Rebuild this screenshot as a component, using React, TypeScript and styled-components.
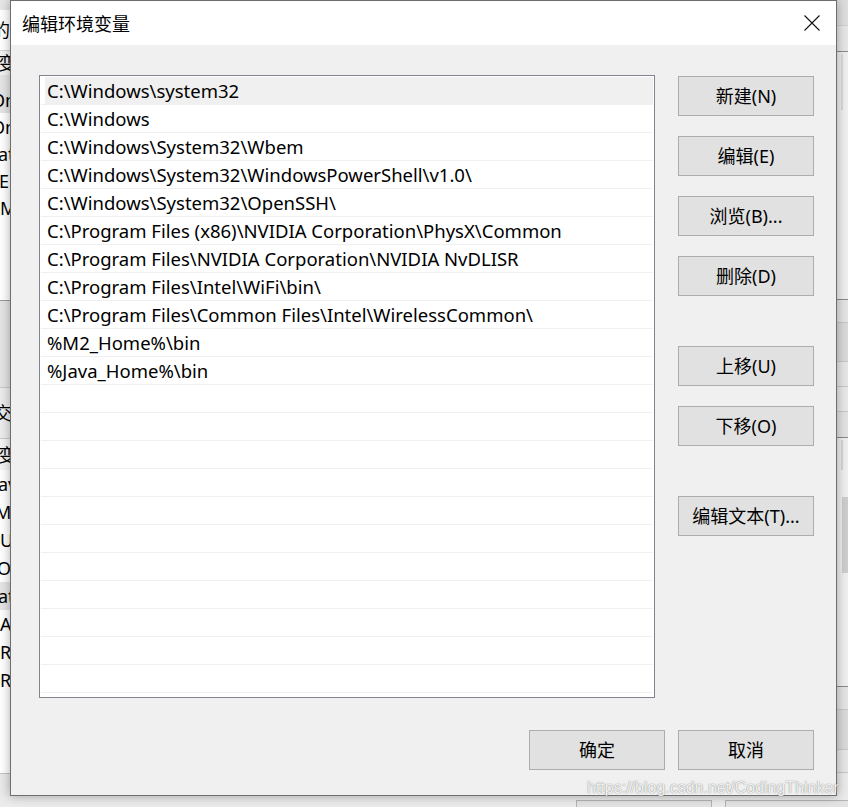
import React from 'react';
import styled, { createGlobalStyle } from 'styled-components';

const Global = createGlobalStyle`
  html, body { margin: 0; padding: 0; background: #e8e8e8; }
  body {
    width: 848px; height: 807px; overflow: hidden;
    font-family: "Noto Sans", "Noto Sans CJK SC", sans-serif;
    -webkit-font-smoothing: antialiased;
  }
`;

const Screen = styled.div`
  position: relative;
  width: 848px;
  height: 807px;
  display: grid;
  grid-template-columns: 10px 827px 11px;
  grid-template-rows: 796px 11px;
  background: #e8e8e8;
  overflow: hidden;
`;

/* ---------- background window strips ---------- */
const Strip = styled.div<{ $col: string; $row: string }>`
  grid-column: ${p => p.$col};
  grid-row: ${p => p.$row};
  display: flex;
  flex-direction: column;
  overflow: hidden;
  background: #ececec;
`;

const Band = styled.div<{ $h: number; $bg?: string; $line?: string; $pad?: number }>`
  flex: 0 0 ${p => p.$h}px;
  height: ${p => p.$h}px;
  box-sizing: border-box;
  background: ${p => p.$bg || 'transparent'};
  border-bottom: ${p => (p.$line ? `1px solid ${p.$line}` : 'none')};
  display: flex;
  align-items: center;
  overflow: hidden;
  padding-top: ${p => p.$pad || 0}px;
  position: relative;
`;

const Frag = styled.span<{ $shift?: number }>`
  display: block;
  white-space: nowrap;
  font-size: 18px;
  line-height: 20px;
  color: #000;
  margin-left: ${p => p.$shift || 0}px;
`;

const Thumb = styled.div<{ $top: number; $h: number; $left: number; $w: number; $bg: string }>`
  position: absolute;
  top: ${p => p.$top}px;
  left: ${p => p.$left}px;
  width: ${p => p.$w}px;
  height: ${p => p.$h}px;
  background: ${p => p.$bg};
`;

const BottomRow = styled.div`
  grid-column: 1 / 4;
  grid-row: 2;
  display: flex;
  gap: 13px;
  padding: 4px 0 0 576px;
  background: #ebebeb;
  overflow: hidden;
`;

const GhostButton = styled.div<{ $w: number }>`
  flex: 0 0 ${p => p.$w}px;
  height: 20px;
  box-sizing: border-box;
  border: 1px solid #b4b4b4;
  background: #e3e3e3;
`;

/* ---------- dialog ---------- */
const Dialog = styled.div`
  grid-column: 2;
  grid-row: 1;
  position: relative;
  z-index: 1;
  box-sizing: border-box;
  border: 1px solid #6e6e6e;
  background: #f0f0f0;
  box-shadow: 0 0 10px rgba(0, 0, 0, 0.32);
  display: flex;
  flex-direction: column;
`;

const TitleBar = styled.div`
  height: 44px;
  flex: 0 0 44px;
  background: #fff;
  display: flex;
  align-items: center;
  justify-content: space-between;
  padding: 0 16px 0 11px;
`;

const Title = styled.div`
  font-family: "Noto Sans CJK SC", sans-serif;
  font-size: 18px;
  color: #000;
  line-height: 20px;
  margin-top: -1px;
`;

const CloseIcon = styled.svg`
  width: 16px;
  height: 16px;
  display: block;
  margin-top: -1px;
`;

const Body = styled.div`
  flex: 1;
  display: flex;
  flex-direction: column;
  padding: 30px 22px 25px 28px;
`;

const Main = styled.div`
  display: flex;
  gap: 23px;
  height: 623px;
`;

const ListBox = styled.div`
  width: 616px;
  height: 623px;
  box-sizing: border-box;
  border: 1px solid #82858e;
  background: #fff;
  padding: 1px 1px 0 1px;
  overflow: hidden;
`;

const Row = styled.div`
  height: 28px;
  box-sizing: border-box;
  border-bottom: 1px solid #f0f0f0;
  display: flex;
  padding-left: 4px;
`;

const RowText = styled.div<{ $selected?: boolean }>`
  flex: 1;
  display: flex;
  align-items: center;
  padding-left: 2px;
  background: ${p => (p.$selected ? '#f0f0f0' : 'transparent')};
  font-family: "Noto Sans", "Noto Sans CJK SC", sans-serif;
  font-size: 18.5px;
  color: #000;
  white-space: nowrap;
`;

const ButtonColumn = styled.div`
  display: flex;
  flex-direction: column;
  gap: 20px;
  padding-top: 1px;
`;

const Button = styled.div<{ $gapBefore?: number }>`
  width: 136px;
  height: 40px;
  box-sizing: border-box;
  border: 1px solid #adadad;
  background: #e1e1e1;
  display: flex;
  align-items: center;
  justify-content: center;
  font-family: "Noto Sans", "Noto Sans CJK SC", sans-serif;
  font-size: 18px;
  color: #000;
  margin-top: ${p => p.$gapBefore || 0}px;
  padding-bottom: 2px;
`;

const Footer = styled.div`
  margin-top: 32px;
  display: flex;
  justify-content: flex-end;
  gap: 13px;
`;

const Watermark = styled.div`
  position: absolute;
  z-index: 2;
  left: 587px;
  top: 778px;
  font-family: "Liberation Sans", Arial, sans-serif;
  font-size: 16px;
  line-height: 20px;
  color: rgba(255, 255, 255, 0.9);
  text-shadow: 0 0 1px rgba(0, 0, 0, 0.45), 0 0 2px rgba(0, 0, 0, 0.15);
  white-space: nowrap;
  pointer-events: none;
`;

const paths = [
  'C:\\Windows\\system32',
  'C:\\Windows',
  'C:\\Windows\\System32\\Wbem',
  'C:\\Windows\\System32\\WindowsPowerShell\\v1.0\\',
  'C:\\Windows\\System32\\OpenSSH\\',
  'C:\\Program Files (x86)\\NVIDIA Corporation\\PhysX\\Common',
  'C:\\Program Files\\NVIDIA Corporation\\NVIDIA NvDLISR',
  'C:\\Program Files\\Intel\\WiFi\\bin\\',
  'C:\\Program Files\\Common Files\\Intel\\WirelessCommon\\',
  '%M2_Home%\\bin',
  '%Java_Home%\\bin',
];

const rows = [...paths, ...Array(11).fill('')];

const topFrags: [string, number][] = [['On', -9], ['On', -9], ['at', -2], ['EM', -1], ['M', 0]];
const lowFrags: [string, number][] = [
  ['av', -2], ['M2', -5], ['JU', -5], ['OS', -3], ['at', -2], ['A', 0], ['R', 0], ['R', 0],
];

export default function App() {
  return (
    <>
      <Global />
      <Screen>
        <Strip $col="1" $row="1">
          <Band $h={10} $bg="#e6e6e6" />
          <Band $h={41} $bg="#fff" $line="#d4d4d4">
            <Frag $shift={-8}>的</Frag>
          </Band>
          <Band $h={24} $bg="#f2f2f2">
            <Frag $shift={-2}>变量</Frag>
          </Band>
          <Band $h={38} $bg="#e5e5e5" $pad={12}>
            <Frag $shift={topFrags[0][1]}>{topFrags[0][0]}</Frag>
          </Band>
          {topFrags.slice(1).map(([f, s], i) => (
            <Band key={i} $h={27} $bg="#fff">
              <Frag $shift={s}>{f}</Frag>
            </Band>
          ))}
          <Band $h={80} $bg="#fff" $line="#9a9a9a" />
          <Band $h={87} $bg="#e4e4e4" $line="#c9c9c9" />
          <Band $h={51} $bg="#ececec" $line="#c9c9c9">
            <Frag $shift={-6}>交</Frag>
          </Band>
          <Band $h={31} $bg="#f4f4f4">
            <Frag $shift={-2}>变量</Frag>
          </Band>
          {lowFrags.map(([f, s], i) => (
            <Band key={i} $h={28} $bg={i === 4 ? '#e5e5e5' : '#fff'}>
              <Frag $shift={s}>{f}</Frag>
            </Band>
          ))}
          <Band $h={80} $bg="#fff" $line="#c2c2c2" />
          <Band $h={22} $bg="#e9e9e9" />
        </Strip>

        <Dialog>
          <TitleBar>
            <Title>编辑环境变量</Title>
            <CloseIcon viewBox="0 0 16 16">
              <path d="M0.5 0.5 L15.5 15.5 M15.5 0.5 L0.5 15.5" stroke="#111" strokeWidth="1.1" fill="none" />
            </CloseIcon>
          </TitleBar>
          <Body>
            <Main>
              <ListBox>
                {rows.map((r, i) => (
                  <Row key={i}>
                    <RowText $selected={i === 0}>{r}</RowText>
                  </Row>
                ))}
              </ListBox>
              <ButtonColumn>
                <Button>新建(N)</Button>
                <Button>编辑(E)</Button>
                <Button>浏览(B)...</Button>
                <Button>删除(D)</Button>
                <Button $gapBefore={30}>上移(U)</Button>
                <Button>下移(O)</Button>
                <Button $gapBefore={30}>编辑文本(T)...</Button>
              </ButtonColumn>
            </Main>
            <Footer>
              <Button>确定</Button>
              <Button>取消</Button>
            </Footer>
          </Body>
        </Dialog>

        <Strip $col="3" $row="1">
          <Band $h={26} $bg="#dedede" $line="#d0d0d0" />
          <Band $h={26} $bg="#e6e6e6" $line="#8a8a8a" />
          <Band $h={248} $bg="#efefef" $line="#8a8a8a">
            <Thumb $top={2} $h={56} $left={4} $w={2} $bg="#dadada" />
          </Band>
          <Band $h={23} $bg="#e4e4e4" $line="#c6c6c6" />
          <Band $h={39} $bg="#d9d9d9" $line="#c6c6c6" />
          <Band $h={25} $bg="#e6e6e6" $line="#c6c6c6" />
          <Band $h={25} $bg="#e8e8e8" $line="#c6c6c6" />
          <Band $h={26} $bg="#e2e2e2" $line="#8a8a8a" />
          <Band $h={249} $bg="#efefef" $line="#8a8a8a">
            <Thumb $top={2} $h={30} $left={4} $w={2} $bg="#d6d6d6" />
            <Thumb $top={59} $h={76} $left={5} $w={6} $bg="#cdcdcd" />
          </Band>
          <Band $h={23} $bg="#e4e4e4" $line="#c6c6c6" />
          <Band $h={40} $bg="#d9d9d9" $line="#c6c6c6" />
          <Band $h={23} $bg="#e6e6e6" $line="#c6c6c6" />
          <Band $h={23} $bg="#eaeaea" />
        </Strip>

        <BottomRow>
          <GhostButton $w={136} />
          <GhostButton $w={136} />
        </BottomRow>

        <Watermark>https://blog.csdn.net/CodingThinker</Watermark>
      </Screen>
    </>
  );
}
